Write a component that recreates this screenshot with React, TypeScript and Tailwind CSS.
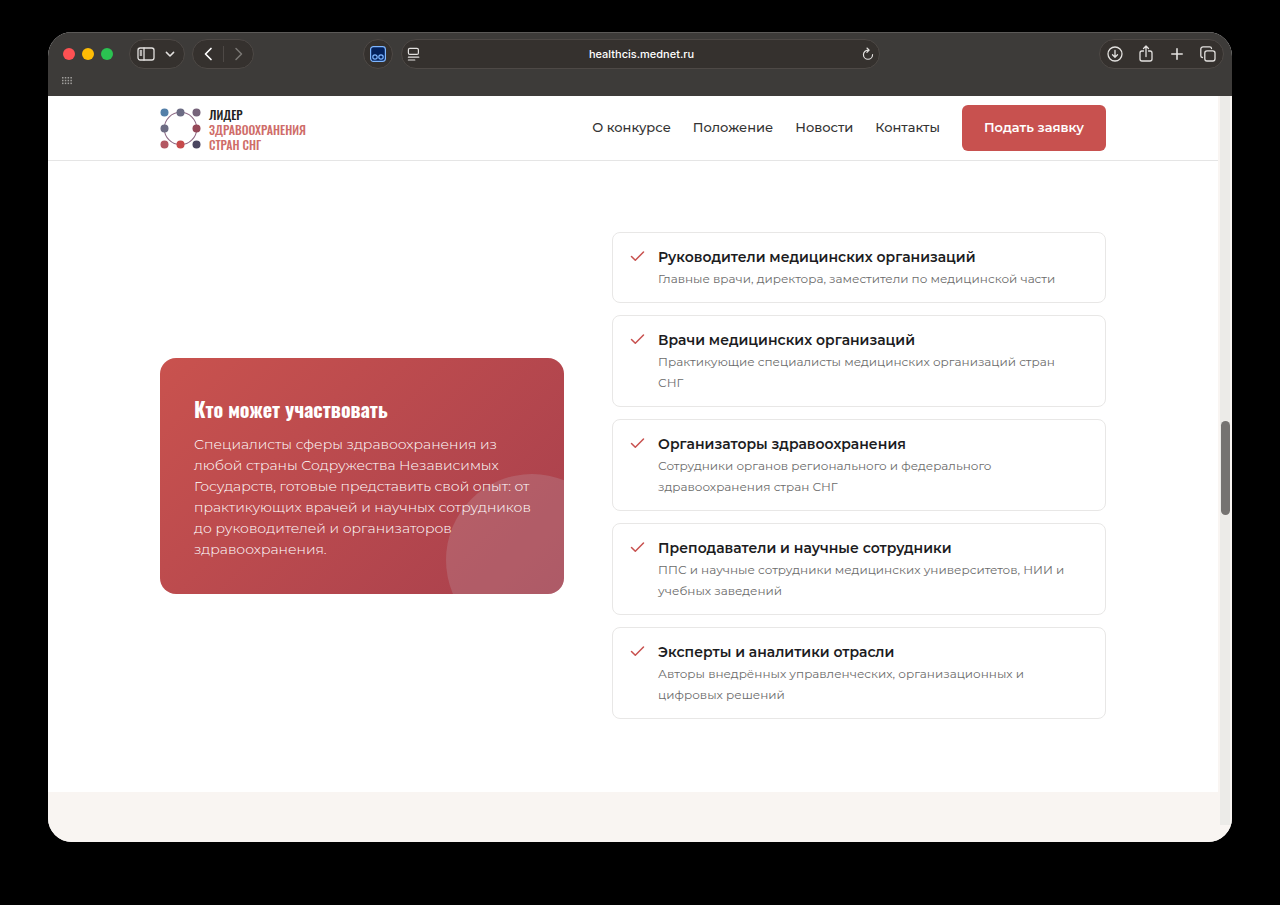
import React from "react";

interface AudienceInterface {
  title: string;
  text: string;
}

const audience: AudienceInterface[] = [
  {
    title: "Руководители медицинских организаций",
    text: "Главные врачи, директора, заместители по медицинской части",
  },
  {
    title: "Врачи медицинских организаций",
    text: "Практикующие специалисты медицинских организаций стран\nСНГ",
  },
  {
    title: "Организаторы здравоохранения",
    text: "Сотрудники органов регионального и федерального\nздравоохранения стран СНГ",
  },
  {
    title: "Преподаватели и научные сотрудники",
    text: "ППС и научные сотрудники медицинских университетов, НИИ и\nучебных заведений",
  },
  {
    title: "Эксперты и аналитики отрасли",
    text: "Авторы внедрённых управленческих, организационных и\nцифровых решений",
  },
];

const links = ["О конкурсе", "Положение", "Новости", "Контакты"];

const intro = `Специалисты сферы здравоохранения из
любой страны Содружества Независимых
Государств, готовые представить свой опыт: от
практикующих врачей и научных сотрудников
до руководителей и организаторов
здравоохранения.`;

interface IconInterface {
  className?: string;
  children: React.ReactNode;
}

const Icon = ({ className = "size-5", children }: IconInterface) => (
  <svg
    viewBox="0 0 20 20"
    className={className}
    fill="none"
    stroke="currentColor"
    strokeWidth="1.3"
    strokeLinecap="round"
    strokeLinejoin="round"
    aria-hidden="true"
  >
    {children}
  </svg>
);

const Toolbar = () => (
  <div className="h-16 bg-[#3d3b39] text-[#e3e1df] border-t border-[#5b5957]">
    <div className="flex items-center pt-1.5 pl-[15px] pr-2">
      <div className="flex gap-[7px]">
        <button aria-label="Закрыть" className="size-3 rounded-full bg-[#fe5153]" />
        <button aria-label="Свернуть" className="size-3 rounded-full bg-[#fdbc05]" />
        <button aria-label="Развернуть" className="size-3 rounded-full bg-[#2bc251]" />
      </div>
      <div className="ml-4 flex h-[30px] w-14 shrink-0 items-center justify-center gap-1.5 rounded-full border border-[#4e4946] bg-[#35312e]">
        <button aria-label="Боковая панель">
          <Icon>
            <rect x="2" y="4" width="16" height="12" rx="2.2" />
            <path d="M8 4v12M4.2 7h1.4M4.2 9h1.4M4.2 11h1.4" />
          </Icon>
        </button>
        <button aria-label="Группы вкладок">
          <Icon className="size-4">
            <path d="M5.500 8l4.500 4.500L14.500 8" strokeWidth="1.9" />
          </Icon>
        </button>
      </div>
      <div className="ml-[7px] flex h-[30px] w-[62px] shrink-0 items-center justify-center rounded-full border border-[#4e4946] bg-[#35312e]">
        <button aria-label="Назад" className="px-1 text-white">
          <Icon>
            <path d="M12 4.500L6.500 10l5.500 5.500" strokeWidth="1.7" />
          </Icon>
        </button>
        <span className="h-4 w-px bg-[#4e4946]" />
        <button aria-label="Вперёд" className="px-1 text-[#7c7875]">
          <Icon>
            <path d="M8 4.500l5.500 5.500L8 15.500" strokeWidth="1.5" />
          </Icon>
        </button>
      </div>
      <div className="flex flex-1 items-center pl-[109px]">
        <button
          aria-label="Расширение"
          className="flex size-[30px] shrink-0 items-center justify-center rounded-full border border-[#4e4946] bg-[#35312e]"
        >
          <svg viewBox="0 0 16 16" className="size-4" fill="none" stroke="#7eb6ff" aria-hidden="true">
            <rect x=".6" y=".6" width="14.8" height="14.8" rx="2.8" fill="#03215c" strokeWidth="1.2" />
            <circle cx="5" cy="11" r="2.2" strokeWidth="1.2" />
            <circle cx="11" cy="11" r="2.2" strokeWidth="1.2" />
          </svg>
        </button>
        <div className="ml-2 flex h-[30px] w-full max-w-[479px] items-center rounded-full border border-[#4e4946] bg-[#35312e] px-1">
          <button aria-label="Режим чтения">
            <Icon className="size-4">
              <rect x="3" y="3" width="12.5" height="7.5" rx="1.8" strokeWidth="1.5" />
              <path d="M3 14h13M3 17.500h8" strokeWidth="1.5" />
            </Icon>
          </button>
          <input
            aria-label="Адрес"
            defaultValue="healthcis.mednet.ru"
            className="min-w-0 flex-1 bg-transparent text-center font-['Inter',sans-serif] text-[11px] font-medium text-white outline-none"
          />
          <button aria-label="Обновить">
            <Icon className="size-[14px]">
              <path d="M10.500 4.500H10a6.500 6.500 0 1 0 6.500 6.500M8.500 1.500l3.200 3-3.200 3" strokeWidth="1.7" />
            </Icon>
          </button>
        </div>
      </div>
      <div className="flex h-[30px] shrink-0 items-center gap-[11px] rounded-full border border-[#4e4946] bg-[#35312e] px-[5px]">
        <button aria-label="Загрузки">
          <Icon>
            <circle cx="10" cy="10" r="7" />
            <path d="M10 6.500v6.500M7.500 10.700l2.500 2.500 2.500-2.500" />
          </Icon>
        </button>
        <button aria-label="Поделиться">
          <Icon>
            <path d="M7.500 7H6a2 2 0 0 0-2 2v6a2 2 0 0 0 2 2h8a2 2 0 0 0 2-2V9a2 2 0 0 0-2-2h-1.500M10 12.500V2.200M7.500 4.500L10 2l2.500 2.500" />
          </Icon>
        </button>
        <button aria-label="Новая вкладка">
          <Icon>
            <path d="M10 4.800v10.400M4.800 10h10.400" strokeWidth="1.6" />
          </Icon>
        </button>
        <button aria-label="Обзор вкладок">
          <Icon>
            <rect x="6.8" y="6.8" width="10.2" height="10.2" rx="2.2" />
            <path d="M4.500 13.500A1.800 1.800 0 0 1 2.800 11.700V5a2.200 2.200 0 0 1 2.200-2.200h6.700a1.800 1.800 0 0 1 1.800 1.700" />
          </Icon>
        </button>
      </div>
    </div>
    <button aria-label="Избранное" className="ml-[14px] mt-2 block">
      <svg viewBox="0 0 10 8" className="h-2 w-[10px]" fill="#a19f9d" aria-hidden="true">
        {[0, 1, 2].map((row) =>
          [0, 1, 2, 3].map((col) => (
            <rect key={`${row}-${col}`} x={col * 2.8} y={row * 2.8} width="1.5" height="1.5" />
          ))
        )}
      </svg>
    </button>
  </div>
);

const Logo = () => (
  <a href="#" className="flex items-center gap-2">
    <svg viewBox="0 0 41 41" className="size-[41px]" aria-hidden="true">
      <circle cx="20.5" cy="20.5" r="16.2" fill="none" stroke="#8f6b86" strokeWidth="1.1" />
      <circle cx="4.5" cy="4.5" r="4" fill="#547fa8" />
      <circle cx="20.5" cy="4.5" r="4" fill="#6c6c84" />
      <circle cx="36.5" cy="4.5" r="4" fill="#76637a" />
      <circle cx="4.5" cy="20.5" r="4" fill="#6d6c83" />
      <circle cx="36.5" cy="20.5" r="4" fill="#954858" />
      <circle cx="4.5" cy="36.5" r="4" fill="#b35762" />
      <circle cx="20.5" cy="36.5" r="4" fill="#c64a4b" />
      <circle cx="36.5" cy="36.5" r="4" fill="#4b4660" />
    </svg>
    <span className="flex flex-col pt-[3px] font-['Oswald','Liberation_Sans_Narrow',sans-serif] text-xs leading-[15px] font-medium text-[#cf6d69]">
      <span className="text-[#222]">ЛИДЕР</span>
      <span>ЗДРАВООХРАНЕНИЯ</span>
      <span>СТРАН СНГ</span>
    </span>
  </a>
);

const Header = () => (
  <header className="flex h-[65px] items-center justify-between border-b border-[#e5e5e5] bg-white px-28">
    <Logo />
    <nav className="flex items-center gap-[22px] text-[13px] font-medium text-[#333]">
      {links.map((link) => (
        <a key={link} href="#">
          {link}
        </a>
      ))}
      <button className="h-[46px] rounded-md bg-[#c8514f] px-[22px] font-semibold text-white">
        Подать заявку
      </button>
    </nav>
  </header>
);

const AudienceCard = ({ title, text }: AudienceInterface) => (
  <li className="flex gap-3 rounded-lg border border-[#e8e7e6] bg-white px-[17px] py-[13px]">
    <svg
      viewBox="0 0 16 16"
      className="mt-0.5 size-4 shrink-0"
      fill="none"
      stroke="#c8514f"
      strokeWidth="1.5"
      strokeLinecap="round"
      strokeLinejoin="round"
      aria-hidden="true"
    >
      <path d="M1.500 8.500l3.800 3.800L13.500 4" />
    </svg>
    <div>
      <h3 className="text-sm leading-[22px] font-semibold text-[#1c1c1e]">{title}</h3>
      <p className="text-xs leading-[21px] whitespace-pre-line text-[#6b6b6b]">{text}</p>
    </div>
  </li>
);

const App = () => {
  return (
    <div className="min-h-screen bg-black px-12 pt-8 pb-[63px] font-['Montserrat','Inter',sans-serif]">
      <div className="overflow-hidden rounded-3xl bg-white">
        <Toolbar />
        <div className="flex">
          <div className="min-w-0 flex-1">
            <Header />
            <main>
              <section className="grid grid-cols-[9fr_11fr] items-center gap-12 px-28 pt-[71px] pb-[73px]">
                <div className="relative overflow-hidden rounded-2xl bg-linear-135 from-[#c9524e] to-[#a8404d] p-[34px]">
                  <div className="absolute -right-[54px] -bottom-[52px] size-[172px] rounded-full bg-[#c8d0e0]/18" />
                  <h2 className="relative mb-2 font-['Oswald','Liberation_Sans_Narrow',sans-serif] text-xl leading-[34px] font-bold text-white">
                    Кто может участвовать
                  </h2>
                  <p className="relative text-sm leading-[21px] font-light whitespace-pre text-white">
                    {intro}
                  </p>
                </div>
                <ul className="flex flex-col gap-3">
                  {audience.map((item) => (
                    <AudienceCard key={item.title} {...item} />
                  ))}
                </ul>
              </section>
              <section className="h-[50px] bg-[#f9f5f2]" />
            </main>
          </div>
          <div className="flex w-[14px] bg-[#f9f5f2] pr-0.5 pb-[17px] pl-0.5">
            <div className="flex-1 bg-[#ecebe8] pl-px">
              <div className="mt-[325px] h-[94px] rounded-full bg-[#757371]" />
            </div>
          </div>
        </div>
      </div>
    </div>
  );
};

export default App;
